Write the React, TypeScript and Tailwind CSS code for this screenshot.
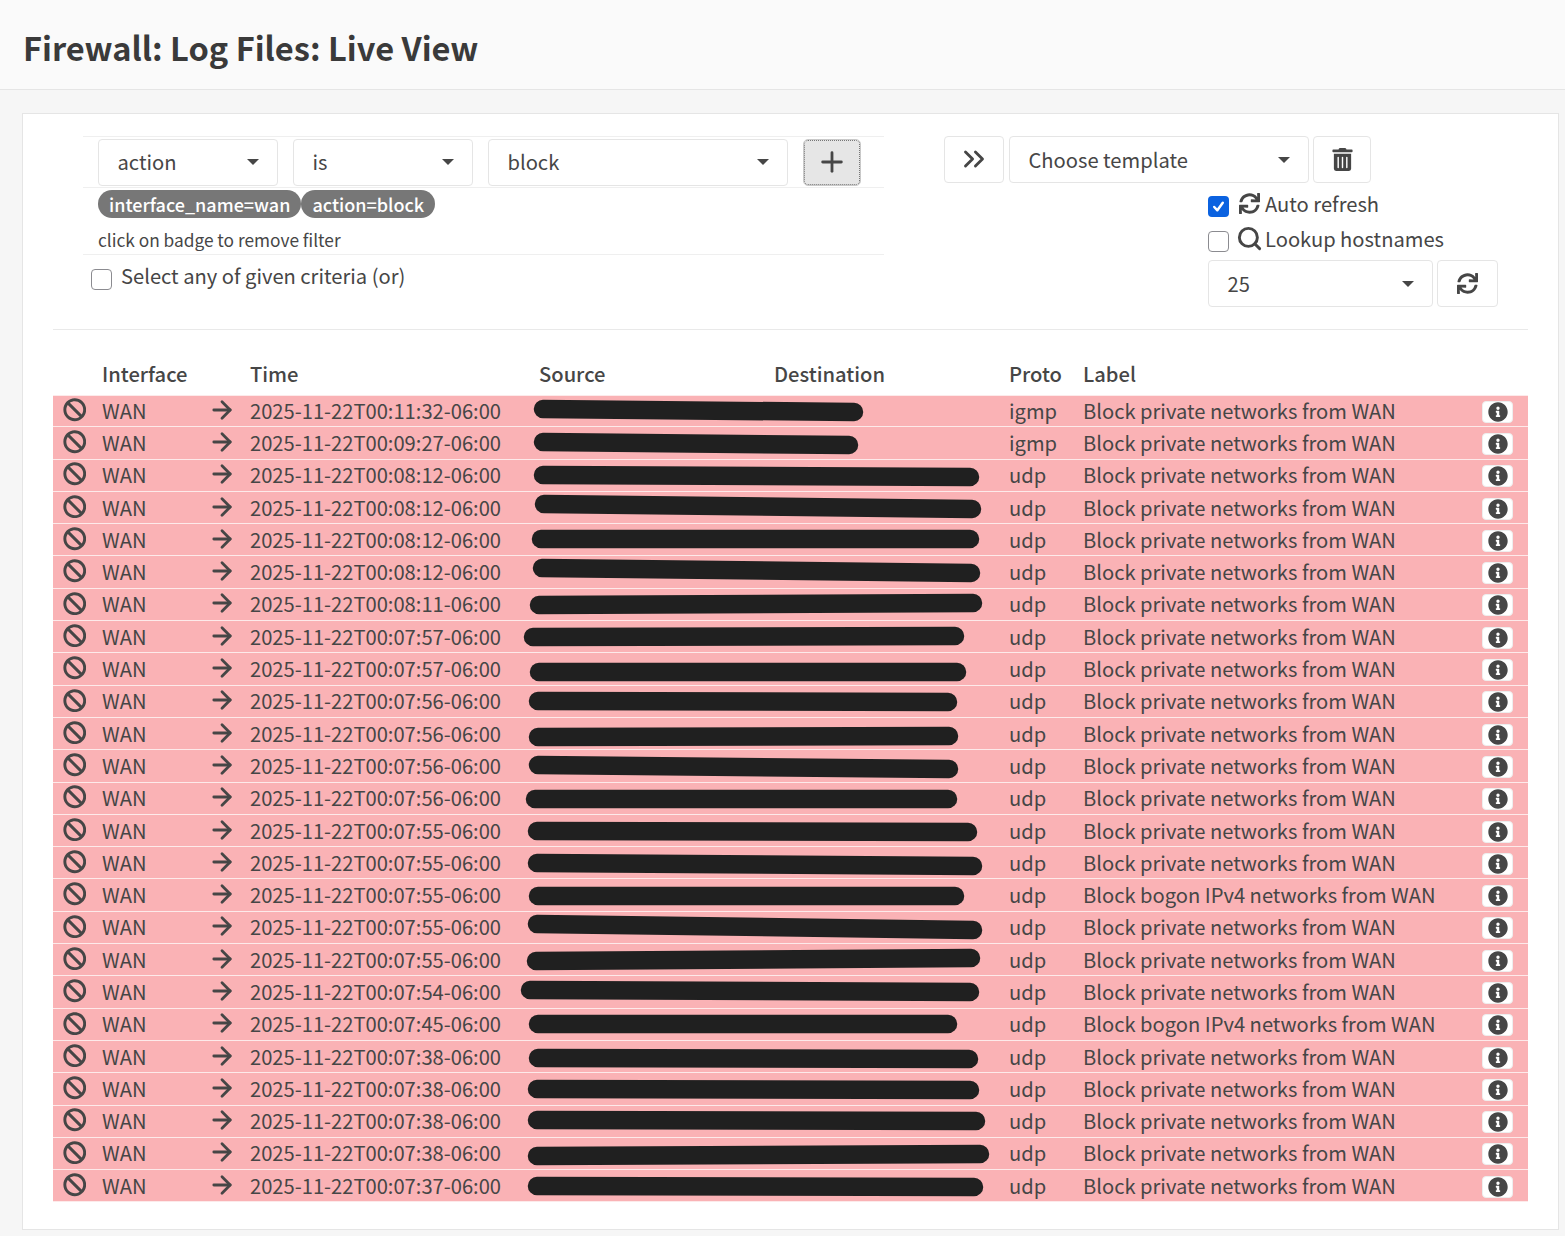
import { FaBan, FaInfoCircle, FaSync, FaTrashAlt } from "react-icons/fa";
import { ArrowRight, ChevronsRight, Plus, Search } from "lucide-react";

const font = { fontFamily: '"Noto Sans CJK SC", "Noto Sans", sans-serif' };

const rowCols = "grid grid-cols-[49px_108px_40px_289px_235px_235px_74px_399px_46px] items-center";

const rows = [
  ["2025-11-22T00:11:32-06:00", "igmp", "Block private networks from WAN"],
  ["2025-11-22T00:09:27-06:00", "igmp", "Block private networks from WAN"],
  ["2025-11-22T00:08:12-06:00", "udp", "Block private networks from WAN"],
  ["2025-11-22T00:08:12-06:00", "udp", "Block private networks from WAN"],
  ["2025-11-22T00:08:12-06:00", "udp", "Block private networks from WAN"],
  ["2025-11-22T00:08:12-06:00", "udp", "Block private networks from WAN"],
  ["2025-11-22T00:08:11-06:00", "udp", "Block private networks from WAN"],
  ["2025-11-22T00:07:57-06:00", "udp", "Block private networks from WAN"],
  ["2025-11-22T00:07:57-06:00", "udp", "Block private networks from WAN"],
  ["2025-11-22T00:07:56-06:00", "udp", "Block private networks from WAN"],
  ["2025-11-22T00:07:56-06:00", "udp", "Block private networks from WAN"],
  ["2025-11-22T00:07:56-06:00", "udp", "Block private networks from WAN"],
  ["2025-11-22T00:07:56-06:00", "udp", "Block private networks from WAN"],
  ["2025-11-22T00:07:55-06:00", "udp", "Block private networks from WAN"],
  ["2025-11-22T00:07:55-06:00", "udp", "Block private networks from WAN"],
  ["2025-11-22T00:07:55-06:00", "udp", "Block bogon IPv4 networks from WAN"],
  ["2025-11-22T00:07:55-06:00", "udp", "Block private networks from WAN"],
  ["2025-11-22T00:07:55-06:00", "udp", "Block private networks from WAN"],
  ["2025-11-22T00:07:54-06:00", "udp", "Block private networks from WAN"],
  ["2025-11-22T00:07:45-06:00", "udp", "Block bogon IPv4 networks from WAN"],
  ["2025-11-22T00:07:38-06:00", "udp", "Block private networks from WAN"],
  ["2025-11-22T00:07:38-06:00", "udp", "Block private networks from WAN"],
  ["2025-11-22T00:07:38-06:00", "udp", "Block private networks from WAN"],
  ["2025-11-22T00:07:38-06:00", "udp", "Block private networks from WAN"],
  ["2025-11-22T00:07:37-06:00", "udp", "Block private networks from WAN"],
];

// scribbled-out source / destination: x1, y1, x2, y2 in page pixels (outer ends of the stroke)
const scribbles = [
  [534, 409, 863, 412], [534, 442, 858, 445], [534, 475, 979, 477], [535, 504, 981, 509], [532, 539, 979, 539],
  [533, 568, 980, 573], [530, 605, 982, 603], [524, 637, 964, 636], [530, 672, 966, 672], [529, 701, 957, 702],
  [529, 737, 958, 736], [529, 765, 958, 769], [526, 799, 957, 799], [528, 831, 977, 832], [528, 863, 982, 866],
  [529, 896, 964, 896], [528, 924, 982, 930], [527, 961, 980, 958], [521, 990, 979, 992], [529, 1024, 957, 1024],
  [529, 1058, 978, 1059], [528, 1089, 979, 1090], [528, 1120, 985, 1121], [528, 1156, 989, 1154], [528, 1186, 983, 1187],
];

function Select({ label, className }: { label: string; className: string }) {
  return (
    <div className={`flex h-[47px] items-center justify-between rounded-[4px] border border-[#e5e5e5] bg-white pl-[18.5px] pr-[18px] ${className}`}>
      <span>{label}</span>
      <span className="h-0 w-0 border-x-[6px] border-t-[6px] border-x-transparent border-t-[#464646]" />
    </div>
  );
}

function Check({ checked, label, icon }: { checked?: boolean; label: string; icon: React.ReactNode }) {
  return (
    <div className="flex h-[35px] items-center">
      {checked ? (
        <span className="mt-[4px] flex h-[21px] w-[21px] items-center justify-center rounded-[4px] bg-[#0b62e0]">
          <svg viewBox="0 0 20 20" className="h-[19px] w-[19px]" fill="none" stroke="white" strokeWidth="2.6" strokeLinecap="round" strokeLinejoin="round">
            <path d="M5.5 10.5 L8.8 14 L14.5 6" />
          </svg>
        </span>
      ) : (
        <span className="mt-[4px] h-[21px] w-[21px] rounded-[4px] border border-[#8b8b90] bg-white" />
      )}
      <span className="ml-[9px] flex w-[22px] -translate-y-[1px] justify-center">{icon}</span>
      <span className="ml-[5px] -translate-y-[1px]">{label}</span>
    </div>
  );
}

export default function App() {
  return (
    <div style={font} className="min-h-[1236px] bg-[#f6f6f6] text-[20.15px] leading-[30px] text-[#464646]">
      <div className="flex h-[90px] items-center border-b border-[#e5e5e5] bg-[#fafafa] pl-[23px]">
        <h1 className="translate-y-[2px] text-[32.6px] font-semibold leading-[44px] text-[#3a3a3a]">Firewall: Log Files: Live View</h1>
      </div>

      <div className="ml-[22px] mr-[6px] mt-[23px] h-[1117px] border border-[#e5e5e5] bg-white px-[30px]">
        <div className="flex h-[216px] border-b border-[#e9e9e9] pt-[22px]">
          <div className="ml-[30px] w-[801px]">
            <div className="flex h-[52px] items-center border-y border-[#efefef] pl-[15px]">
              <Select label="action" className="w-[180px]" />
              <Select label="is" className="ml-[15px] w-[180px]" />
              <Select label="block" className="ml-[15px] w-[300px]" />
              <button className="ml-[16px] flex h-[45px] w-[56px] items-center justify-center rounded-[4px] border border-dotted border-[#777] bg-[#e6e6e6] outline outline-1 outline-[#c9c9c9]">
                <Plus className="h-[32px] w-[32px] text-[#464646]" strokeWidth={2.1} />
              </button>
            </div>
            <div className="flex pl-[15px] pt-[2px] text-[18px] font-medium leading-[28px] text-white">
              <span className="rounded-full bg-[#777777] px-[11px]">interface_name=wan</span>
              <span className="rounded-full bg-[#777777] px-[11px]">action=block</span>
            </div>
            <div className="h-[37px] border-b border-[#efefef] pl-[15px] pt-[8px] text-[17.3px] leading-[27px]">click on badge to remove filter</div>
            <div className="flex items-center pl-[8px] pt-[6px]">
              <span className="mt-[6px] h-[21px] w-[21px] rounded-[4px] border border-[#8b8b90] bg-white" />
              <span className="ml-[9px]">Select any of given criteria (or)</span>
            </div>
          </div>

          <div className="ml-[60px] w-[554px]">
            <div className="flex">
              <button className="flex h-[47px] w-[60px] items-center justify-center rounded-[4px] border border-[#e5e5e5]">
                <ChevronsRight className="h-[34px] w-[34px] shrink-0 -translate-y-[1px]" strokeWidth={2} />
              </button>
              <Select label="Choose template" className="ml-[5px] w-[300px]" />
              <button className="ml-[4px] flex h-[47px] w-[58px] items-center justify-center rounded-[4px] border border-[#e5e5e5]">
                <FaTrashAlt className="h-[23px] w-[21px]" />
              </button>
            </div>
            <div className="ml-[264px] pt-[4px]">
              <Check checked label="Auto refresh" icon={<FaSync className="h-[21px] w-[21px]" />} />
              <Check label="Lookup hostnames" icon={<Search className="h-[27px] w-[27px] shrink-0" strokeWidth={2.6} />} />
              <div className="mt-[3px] flex">
                <Select label="25" className="w-[225px]" />
                <button className="ml-[4px] flex h-[47px] w-[61px] items-center justify-center rounded-[4px] border border-[#e5e5e5]">
                  <FaSync className="h-[21px] w-[21px]" />
                </button>
              </div>
            </div>
          </div>
        </div>

        <div className={`${rowCols} mt-[26px] h-[39px] -translate-y-[2px] font-medium`}>
          <span />
          <span>Interface</span>
          <span />
          <span>Time</span>
          <span>Source</span>
          <span>Destination</span>
          <span>Proto</span>
          <span>Label</span>
          <span />
        </div>

        <div className="relative">
          {rows.map(([time, proto, label], i) => (
            <div key={i} className={`${rowCols} h-[32.3px] border-b border-[#fdeaea] bg-[#fab2b5] first:border-t last:border-b-0`}>
              <FaBan className="ml-[9.5px] h-[23.5px] w-[23.5px] -translate-y-[1px]" />
              <span>WAN</span>
              <ArrowRight className="-ml-[2px] h-[28px] w-[28px] -translate-y-[1px]" strokeWidth={2.4} />
              <span>{time}</span>
              <span />
              <span />
              <span>{proto}</span>
              <span>{label}</span>
              <span className="flex h-[22px] w-[31px] translate-y-[1px] items-center justify-center rounded-[4px] border border-[#eee] bg-white">
                <FaInfoCircle className="h-[20px] w-[20px]" />
              </span>
            </div>
          ))}
          <svg className="pointer-events-none absolute left-0 top-0 overflow-visible" width="1475" height="807" viewBox="53 395 1475 807">
            {scribbles.map(([x1, y1, x2, y2], i) => (
              <line key={i} x1={x1 + 9} y1={y1} x2={x2 - 9} y2={y2} stroke="#202020" strokeWidth="18.5" strokeLinecap="round" />
            ))}
          </svg>
        </div>
      </div>
    </div>
  );
}
